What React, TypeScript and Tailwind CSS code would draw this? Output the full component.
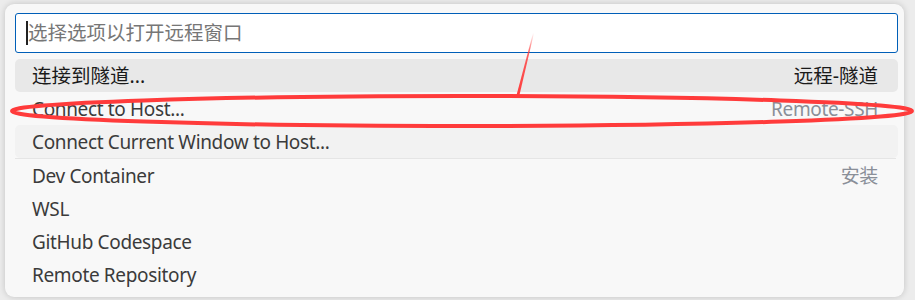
import React from "react";

const font = { fontFamily: '"Noto Sans", "Noto Sans CJK SC", sans-serif' };

type Item = { label: string; right?: string; kind?: "active" | "hover" | "none"; rightDark?: boolean; cjk?: boolean };

function Row({ label, right, kind = "none", rightDark, cjk }: Item) {
  const bg = kind === "active" ? "bg-[#e8e8e8]" : kind === "hover" ? "bg-[#f2f2f2]" : "";
  const txt = kind === "active" ? "text-[#1a1a1a]" : "text-[#3b3b3b]";
  const size = cjk ? "text-[19.5px]" : "text-[19px] tracking-[-0.35px]";
  return (
    <div className={`h-[33px] flex items-center justify-between pl-[17px] pr-[20px] rounded-[5px] ${cjk ? "" : "pt-[2px]"} ${bg}`}>
      <span className={`${size} leading-none ${txt}`}>{label}</span>
      {right && (
        <span className={`${size} leading-none ${rightDark ? "text-[#1a1a1a]" : "text-[#8a8f98]"}`}>{right}</span>
      )}
    </div>
  );
}

export default function App() {
  return (
    <div className="w-[915px] h-[300px] bg-[#ececec] overflow-hidden relative pt-[4px] pl-[5px]" style={font}>
      <div className="w-[899px] h-[293px] bg-[#f8f8f8] rounded-[9px] shadow-[0_0_6px_rgba(0,0,0,0.18)] pt-[9px] pl-[10px] pr-[6px] flex flex-col">
        <div className="h-[40px] border border-[#005fb8] rounded-[3px] bg-white flex items-center pl-[10px]">
          <div className="w-[2px] h-[24px] bg-[#222]" />
          <span className="text-[19.5px] leading-none text-[#767676]">选择选项以打开远程窗口</span>
        </div>
        <div className="mt-[6px] flex flex-col">
          <Row label="连接到隧道..." right="远程-隧道" kind="active" rightDark cjk />
          <Row label="Connect to Host..." right="Remote-SSH" />
          <Row label="Connect Current Window to Host..." kind="hover" />
          <div className="h-px bg-[#e5e5e5] mr-[2px]" />
          <Row label="Dev Container" right="安装" />
          <Row label="WSL" />
          <Row label="GitHub Codespace" />
          <Row label="Remote Repository" />
        </div>
      </div>
      <svg className="absolute left-0 top-0 pointer-events-none" width="915" height="300" viewBox="0 0 915 300">
        <defs>
          <linearGradient id="fade" x1="0" y1="1" x2="0" y2="0">
            <stop offset="0%" stopColor="#ff3b3b" stopOpacity="1" />
            <stop offset="70%" stopColor="#ff3b3b" stopOpacity="0.8" />
            <stop offset="100%" stopColor="#ff3b3b" stopOpacity="0" />
          </linearGradient>
        </defs>
        <ellipse cx="462" cy="111" rx="450" ry="15" fill="none" stroke="#ff3b3b" strokeWidth="4" />
        <polygon points="516,97 519,97 534,33 533,33" fill="url(#fade)" />
      </svg>
    </div>
  );
}
